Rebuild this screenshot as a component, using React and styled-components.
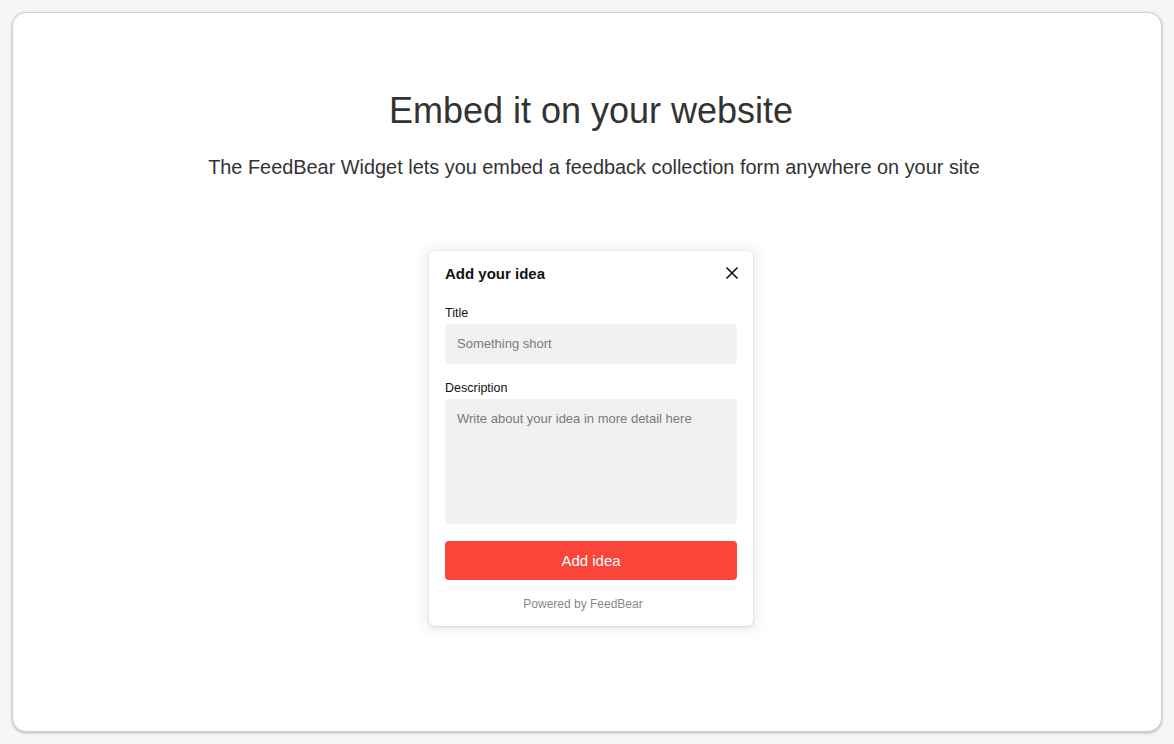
import React from "react";
import styled, { createGlobalStyle } from "styled-components";

const GlobalStyle = createGlobalStyle`
  html, body {
    margin: 0;
    padding: 0;
    background: #f6f6f6;
    font-family: "Liberation Sans", Arial, sans-serif;
  }
`;

const Page = styled.div`
  padding: 12px;
`;

const Frame = styled.div`
  box-sizing: border-box;
  width: 1150px;
  height: 720px;
  background: #fff;
  border-radius: 14px;
  border: 1px solid #d0d0d0;
  box-shadow: 0 1px 3px rgba(0, 0, 0, 0.28);
  display: flex;
  flex-direction: column;
  align-items: center;
  padding: 76px 0 0 8px;
`;

const Heading = styled.h1`
  margin: 0;
  font-size: 36px;
  font-weight: 400;
  color: #333;
  line-height: 44px;
`;

const Lead = styled.p`
  margin: 22px 0 0 6px;
  font-size: 19.9px;
  color: #333;
  line-height: 24px;
`;

const Card = styled.div`
  box-sizing: border-box;
  margin-top: 72px;
  width: 324px;
  background: #fff;
  border-radius: 6px;
  padding: 14px 16px 15px;
  box-shadow: 0 0 0 1px rgba(0, 0, 0, 0.03), 0 2px 4px rgba(0, 0, 0, 0.08),
    0 0 10px 8px rgba(0, 0, 0, 0.04);
`;

const CardHeader = styled.div`
  display: flex;
  align-items: center;
  justify-content: space-between;
  height: 16px;
`;

const CardTitle = styled.h2`
  margin: 0;
  font-size: 15px;
  font-weight: 700;
  color: #111;
`;

const CloseButton = styled.button`
  border: 0;
  background: none;
  padding: 0;
  margin-right: -3px;
  display: flex;
  cursor: pointer;
`;

const Label = styled.label`
  display: block;
  font-size: 12.5px;
  color: #111;
  margin-top: ${(p) => p.$top}px;
  line-height: 16px;
`;

const Field = styled.div`
  box-sizing: border-box;
  margin-top: 3px;
  height: ${(p) => p.$height}px;
  background: #f1f1f1;
  border-radius: 4px;
  padding: ${(p) => p.$padTop}px 12px 0;
  font-size: 13px;
  color: #7a7a7a;
`;

const SubmitButton = styled.button`
  display: block;
  width: 100%;
  height: 39px;
  margin-top: 17px;
  border: 0;
  border-radius: 4px;
  background: #f9453a;
  color: #fff;
  font-family: inherit;
  font-size: 15px;
  cursor: pointer;
`;

const Powered = styled.div`
  margin-top: 17px;
  padding-right: 16px;
  text-align: center;
  font-size: 12px;
  color: #888;
`;

export default function App() {
  return (
    <Page>
      <GlobalStyle />
      <Frame>
        <Heading>Embed it on your website</Heading>
        <Lead>
          The FeedBear Widget lets you embed a feedback collection form anywhere
          on your site
        </Lead>
        <Card>
          <CardHeader>
            <CardTitle>Add your idea</CardTitle>
            <CloseButton aria-label="Close">
              <svg width="16" height="16" viewBox="0 0 16 16">
                <path
                  d="M2.5 2.5l11 11M13.5 2.5l-11 11"
                  stroke="#111"
                  strokeWidth="1.6"
                  fill="none"
                />
              </svg>
            </CloseButton>
          </CardHeader>
          <Label $top={24}>Title</Label>
          <Field $height={40} $padTop={12}>
            Something short
          </Field>
          <Label $top={16}>Description</Label>
          <Field $height={125} $padTop={12}>
            Write about your idea in more detail here
          </Field>
          <SubmitButton>Add idea</SubmitButton>
          <Powered>Powered by FeedBear</Powered>
        </Card>
      </Frame>
    </Page>
  );
}
